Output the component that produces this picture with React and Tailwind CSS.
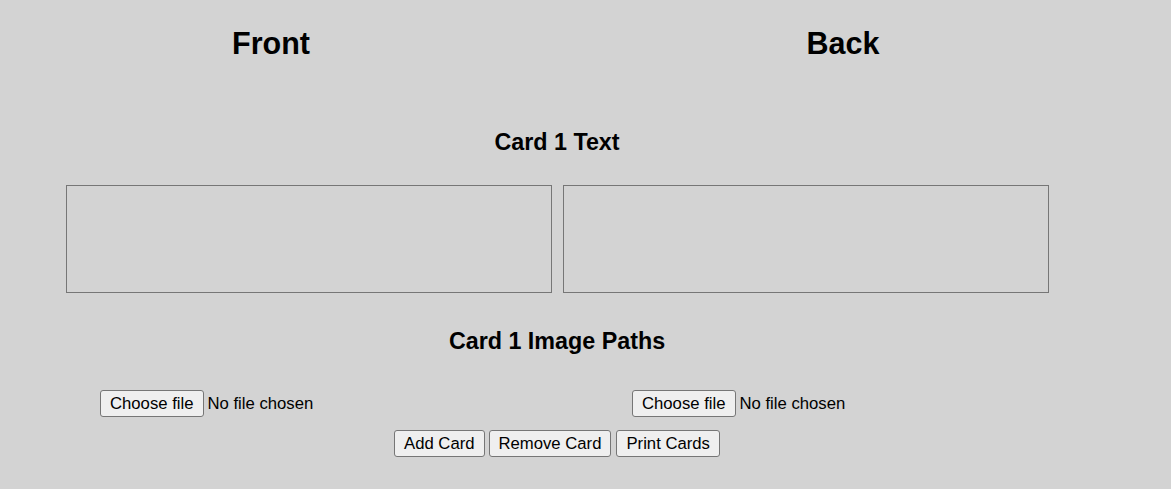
export default function App() {
  const btn =
    "h-[27px] px-[9px] bg-[#efefef] border border-[#767676] rounded-[3px] text-[16.7px] leading-[20px] text-black";
  return (
    <div
      className="w-[1171px] h-[489px] bg-[#d3d3d3] text-black overflow-hidden"
      style={{ fontFamily: '"Liberation Sans", Arial, sans-serif' }}
    >
      <div className="w-[1114px] flex flex-col">
        <div className="flex justify-center gap-[72px] mt-[25px]">
          <h1 className="w-[500px] text-center text-[30.5px] leading-[37px] font-bold">Front</h1>
          <h1 className="w-[500px] text-center text-[30.5px] leading-[37px] font-bold">Back</h1>
        </div>
        <h2 className="mt-[67px] text-center text-[23.3px] leading-[27px] font-bold">Card 1 Text</h2>
        <div className="flex gap-[11px] pl-[66px] mt-[29px]">
          <textarea className="w-[486px] h-[108px] border border-[#767676] bg-transparent resize-none outline-none" />
          <textarea className="w-[486px] h-[108px] border border-[#767676] bg-transparent resize-none outline-none" />
        </div>
        <h2 className="mt-[35px] text-center text-[23.3px] leading-[27px] font-bold">Card 1 Image Paths</h2>
        <div className="flex mt-[35px] h-[27px]">
          <div className="flex items-center ml-[100px] w-[532px]">
            <button className={btn}>Choose file</button>
            <span className="ml-[4px] text-[16.7px]">No file chosen</span>
          </div>
          <div className="flex items-center">
            <button className={btn}>Choose file</button>
            <span className="ml-[4px] text-[16.7px]">No file chosen</span>
          </div>
        </div>
        <div className="flex ml-[394px] mt-[13px]">
          <button className={btn}>Add Card</button>
          <button className={`${btn} ml-[4px]`}>Remove Card</button>
          <button className={`${btn} ml-[5px]`}>Print Cards</button>
        </div>
      </div>
    </div>
  );
}
